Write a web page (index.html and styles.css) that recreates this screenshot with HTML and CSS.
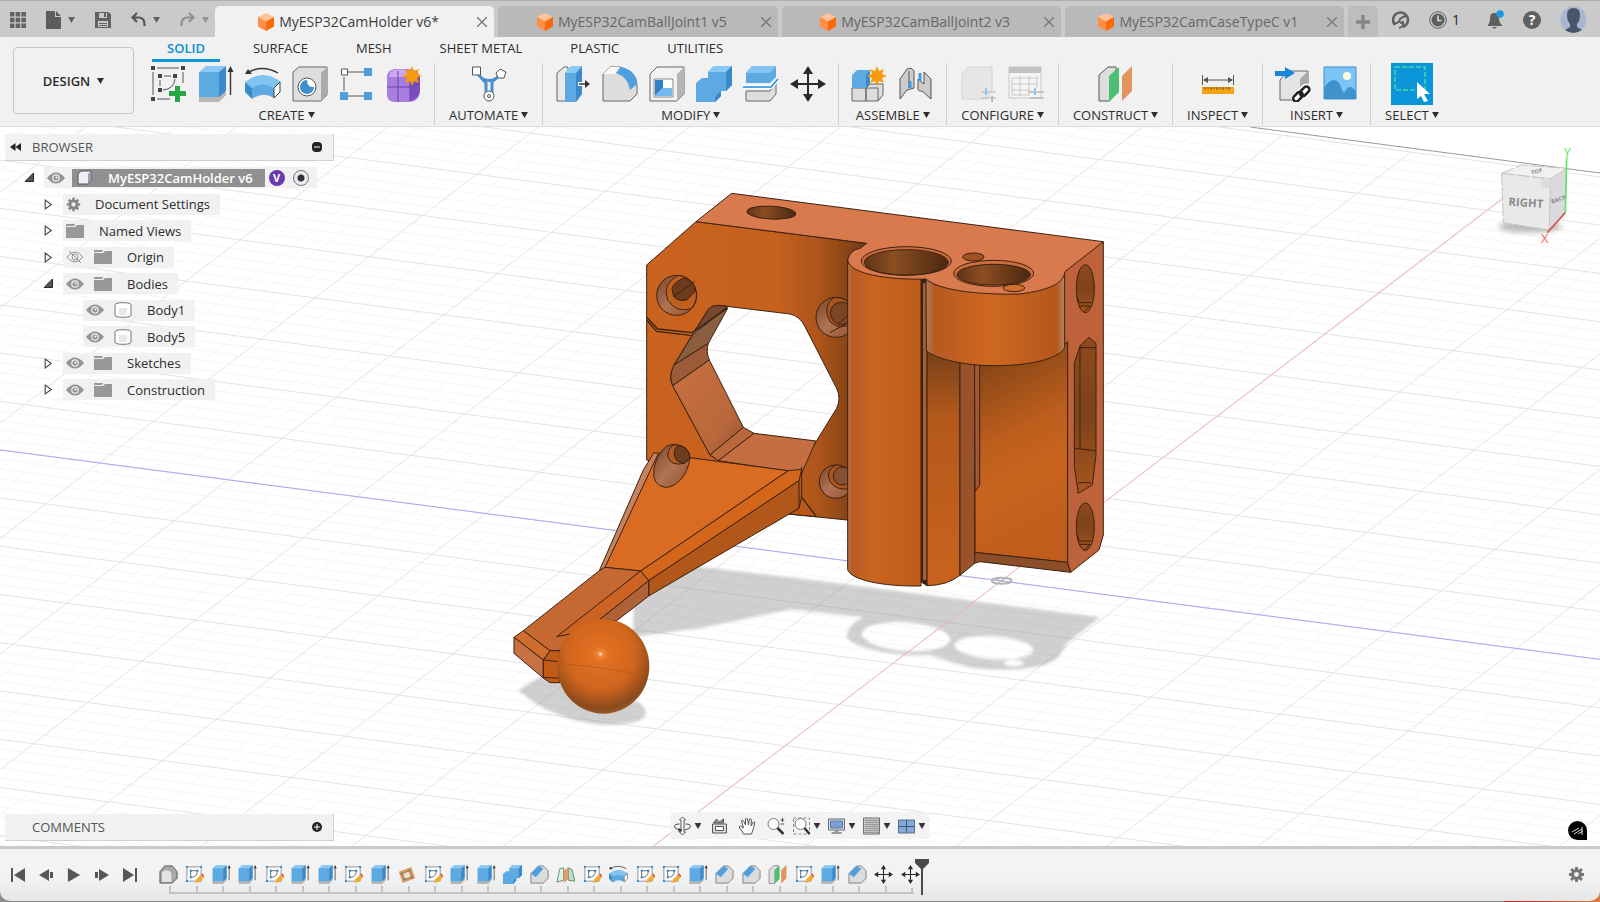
FILE: index.html
```html
<!DOCTYPE html>
<html lang="en">
<head>
  <meta charset="UTF-8">
  <meta name="viewport" content="width=device-width, initial-scale=1.0">
  <title>MyESP32CamHolder v6</title>
  <link rel="stylesheet" href="styles.css">
</head>
<body>
  <!-- shared icons -->
  <svg class="sprite" aria-hidden="true">
    <symbol id="caret" viewBox="0 0 8 7"><path d="M0 0H8L4 7Z" fill="currentColor"/></symbol>
    <symbol id="cube" viewBox="0 0 16 18">
      <path d="M8 0L16 4 8 9 0 4Z" fill="#ffc29b"/><path d="M0 4L8 8.500V18L0 13.500Z" fill="#ff8f45"/><path d="M16 4L8 8.500V18L16 13.500Z" fill="#fb6a0a"/>
    </symbol>
    <symbol id="close" viewBox="0 0 10 10"><path d="M1 1L9 9M9 1L1 9" stroke="currentColor" stroke-width="1.100"/></symbol>
    <symbol id="gear" viewBox="0 0 18 18">
      <path d="M9 1V17M1 9H17M3.300 3.300L14.700 14.700M14.700 3.300L3.300 14.700" stroke="currentColor" stroke-width="3"/>
      <circle cx="9" cy="9" r="5.800" fill="currentColor"/><circle cx="9" cy="9" r="2.600" fill="#f0f0f0"/>
    </symbol>
    <symbol id="eye" viewBox="0 0 18 12">
      <path d="M0 6Q9 -5 18 6Q9 17 0 6Z" fill="#949494"/><circle cx="9" cy="6" r="3.800" fill="#f0f0f0"/><circle cx="9" cy="6" r="2.600" fill="#949494"/><circle cx="9.500" cy="5.500" r="1" fill="#fff"/>
    </symbol>
    <symbol id="eye-off" viewBox="0 0 18 12">
      <path d="M1 6Q9 -4 17 6Q9 16 1 6Z" fill="none" stroke="#949494"/><circle cx="9" cy="6" r="3" fill="none" stroke="#949494"/><path d="M3 0L15 12" stroke="#949494"/>
    </symbol>
    <symbol id="folder" viewBox="0 0 18 14"><path d="M0 3H9L11 1H18V14H0Z" fill="#989898"/><path d="M0 0H9L8 2H0Z" fill="#989898"/></symbol>
    <symbol id="body" viewBox="0 0 18 16">
      <path d="M1 3Q1 .700 9 .700T17 3V13Q17 15.300 9 15.300T1 13Z" fill="#fff" stroke="#777"/><path d="M5 6H13V13H5Z" fill="#e8e8ec"/>
    </symbol>
    <symbol id="arrow-shut" viewBox="0 0 8 10"><path d="M1 1V9L6.500 5Z" fill="#fff" stroke="#444"/></symbol>
    <symbol id="arrow-open" viewBox="0 0 9 9"><path d="M8.500 0V8.500H0Z" fill="#555" stroke="#222"/></symbol>

    <symbol id="sketch" viewBox="0 0 36 36">
      <path d="M6 2H28M32 6V17M2 6V29M6 33H19" fill="none" stroke="#555"/>
      <path d="M13 10H20M9 14V20M24 13Q23 23 12 24" fill="none" stroke="#555"/>
      <path d="M0 0h4v4H0zM30 0h4v4h-4zM0 31h4v4H0zM7 8h4v4H7zM22 8h4v4h-4zM7 22h4v4H7z" fill="#444"/>
      <path d="M24 20h5v5h6v5h-6v6h-5v-6h-6v-5h6z" fill="#27a745"/>
    </symbol>
    <symbol id="extrude" viewBox="0 0 36 36">
      <path d="M1 31L8 26H28V29L21 36H1Z" fill="#b7b7b7"/><path d="M1 6L8 0H28L21 6Z" fill="#8ac8f5"/><path d="M1 6H21V31H1Z" fill="#5da9e2"/><path d="M21 6L28 0V25L21 31Z" fill="#3a8acb"/>
      <path d="M32.500 29V4" stroke="#333" stroke-width="1.400"/><path d="M29.500 6L32.500 0 35.500 6Z" fill="#333"/>
    </symbol>
    <symbol id="revolve" viewBox="0 0 36 36">
      <path d="M2 7Q17 -2 33 7" fill="none" stroke="#333" stroke-width="1.400"/><path d="M0 8L3 3 7 8Z" fill="#333"/>
      <path d="M0 16Q18 2 36 16L29 23Q18 15 7 23Z" fill="#82c3f2"/><path d="M0 16L7 22V33L0 26Z" fill="#3a8acb"/><path d="M7 22Q18 15 29 22V32Q18 25 7 33Z" fill="#5da9e2"/><path d="M29 22L35 16V26L29 32Z" fill="#fff" stroke="#444"/>
    </symbol>
    <symbol id="hole" viewBox="0 0 36 36">
      <path d="M1 6L7 1H35V29L29 35H1Z" fill="#dedede" stroke="#666"/><path d="M29 7L35 1V29L29 35Z" fill="#aaa"/>
      <circle cx="15" cy="21" r="9" fill="#fff" stroke="#555"/><path d="M15 14A7 7 0 1 0 22 21Q15 22 15 14Z" fill="#3b8fd0"/>
    </symbol>
    <symbol id="pattern" viewBox="0 0 36 36">
      <path d="M9 6H25M5 11V25M9 30H25" stroke="#555"/><path d="M2.500 3h6v6h-6z" fill="#fff" stroke="#555"/><path d="M25 2h8v8h-8zM1 26h8v8H1zM25 26h8v8h-8z" fill="#4f9fdf"/>
    </symbol>
    <symbol id="form" viewBox="0 0 36 36">
      <path d="M1 11Q1 4 9 3H22Q33 3 34 12V24Q34 36 22 36H9Q1 36 1 28Z" fill="#a87de0"/><path d="M24 12L34 9V24Q33 33 24 35Z" fill="#7a4dba"/><path d="M4 6Q10 2 20 4L22 11H3Z" fill="#c9aaf0"/>
      <path d="M1 21H24L34 17M12 5V36M24 11V35" fill="none" stroke="#6e45ab"/>
      <path d="M26 0l2 5 5-2-2 5 5 2-5 2 2 5-5-2-2 5-2-5-5 2 2-5-5-2 5-2-2-5 5 2z" fill="#f79c0c"/>
    </symbol>
    <symbol id="automate" viewBox="0 0 36 36">
      <path d="M6 7L15 17V27M30 8L21 16V27M10 12Q18 17 26 12" fill="none" stroke="#4a90cf" stroke-width="3"/>
      <path d="M1.500 1h8v8h-8zM29 3l6 3-2 6-6 0-2-5z" fill="#fff" stroke="#555"/><circle cx="18" cy="30" r="5" fill="#fff" stroke="#555"/><circle cx="18" cy="30" r="1.500" fill="none" stroke="#555"/>
    </symbol>
    <symbol id="presspull" viewBox="0 0 36 36">
      <path d="M2 7L9 1H13V35H2Z" fill="#e9e9e9" stroke="#666"/><path d="M10 7L16 0H27L21 7Z" fill="#8ac8f5"/><path d="M10 7H21V36H10Z" fill="#5da9e2"/><path d="M21 7L27 0V28L21 36Z" fill="#3a8acb"/>
      <path d="M23 18H32" stroke="#fff" stroke-width="4"/><path d="M24 18H31" stroke="#333" stroke-width="1.500"/><path d="M30 14L35 18 30 22Z" fill="#333"/>
    </symbol>
    <symbol id="fillet" viewBox="0 0 36 36">
      <path d="M1 8L8 1H18Q35 6 35 19V28L28 35H1Z" fill="#ddd" stroke="#666"/><path d="M1 8L8 1H18L13 8Z" fill="#fafafa"/><path d="M14 7L19 1Q34 4 35 18L28 24Q26 11 14 7Z" fill="#4f9fdf"/>
    </symbol>
    <symbol id="shell" viewBox="0 0 36 36">
      <path d="M1 8L8 1H35V28L28 35H1Z" fill="#f2f2f2" stroke="#666"/><path d="M28 8L35 1V28L28 35Z" fill="#b5b5b5"/><path d="M5 13H24V31H5Z" fill="#fff" stroke="#888"/><path d="M6 14H14V22L6 30Z" fill="#2f80c4"/><path d="M6 30L14 22H23V30Z" fill="#72baf0"/>
    </symbol>
    <symbol id="combine" viewBox="0 0 36 36">
      <path d="M12 6L18 0H36V19L30 25H25V30L19 36H0V17L6 12H12Z" fill="#5da9e2"/><path d="M12 6L18 0H36L30 6Z" fill="#8ac8f5"/><path d="M30 6L36 0V19L30 25ZM19 31L25 24V30L19 36Z" fill="#3a8acb"/>
    </symbol>
    <symbol id="split" viewBox="0 0 36 36">
      <path d="M3 7L9 0H33V11L27 17H3Z" fill="#5da9e2"/><path d="M3 7L9 0H33L27 7Z" fill="#82c3f2"/><path d="M3 25H27L33 17V28L27 35H3Z" fill="#ddd" stroke="#666"/>
      <path d="M0 21H28L35 13" fill="none" stroke="#fff" stroke-width="4"/><path d="M0 21H28L35 13" fill="none" stroke="#1c8add" stroke-width="1.500"/>
    </symbol>
    <symbol id="move" viewBox="0 0 36 36">
      <path d="M18 5V31M5 18H31" stroke="#2a2a2a" stroke-width="2"/><path d="M18 0l5 8H13zM18 36l5-8H13zM0 18l8-5v10zM36 18l-8-5v10z" fill="#2a2a2a"/>
    </symbol>
    <symbol id="component" viewBox="0 0 36 36">
      <path d="M1 22H15V35H1ZM15 22L19 18H32V29L27 35H15Z" fill="#ddd" stroke="#666"/><path d="M1 9L6 4H19V17L15 22H1Z" fill="#5da9e2"/><path d="M15 9L19 4V17L15 22Z" fill="#3a8acb"/><path d="M15 22H27V35" fill="none" stroke="#666"/>
      <path d="M26 0l2 5 5-2-2 5 5 2-5 2 2 5-5-2-2 5-2-5-5 2 2-5-5-2 5-2-2-5 5 2z" fill="#f79c0c"/>
    </symbol>
    <symbol id="joint" viewBox="0 0 36 36">
      <path d="M2 13L9 3Q14 1 16 5V22L9 24 2 33Z" fill="#ccc" stroke="#555"/><path d="M11 5V22" stroke="#555"/><path d="M26 6L33 13V33L24 25Q19 26 20 20V13L26 18Z" fill="#ccc" stroke="#555"/><path d="M12 15V22M22 7V15" stroke="#3b9be5" stroke-width="3"/>
    </symbol>
    <symbol id="config" viewBox="0 0 36 36">
      <path d="M1 8L8 1H31V24L26 33H1Z" fill="#e6e6e6" stroke="#d4d4d4"/><path d="M20 26H35M20 32H35" stroke="#c8c8c8" stroke-width="1.500"/><path d="M25 22V29" stroke="#8cc7f2" stroke-width="2"/><path d="M31 30V36" stroke="#bbb" stroke-width="2"/>
    </symbol>
    <symbol id="config-table" viewBox="0 0 36 36">
      <path d="M1 1H33V32H1Z" fill="#f4f4f4" stroke="#c8c8c8"/><path d="M1 1H33V7H1Z" fill="#c2c2c2"/><path d="M4 12H30M4 18H30M4 24H22M4 29H20M4 12V29M12 10V30M21 10V30M29 10V22" stroke="#c8c8c8"/><path d="M20 26H36M22 32H36" stroke="#b8b8b8" stroke-width="1.500"/><path d="M27 22V29" stroke="#8cc7f2" stroke-width="2"/>
    </symbol>
    <symbol id="plane" viewBox="0 0 36 36">
      <path d="M2 9L11 1H19V28L12 35H2Z" fill="#ddd" stroke="#555"/><path d="M12 10L22 1V26L12 36Z" fill="#4cbf74"/><path d="M25 10L35 0V25L25 35Z" fill="#e3935e"/>
    </symbol>
    <symbol id="measure" viewBox="0 0 36 36">
      <path d="M2.500 9V19M33.500 9V19M4 14H32" stroke="#555"/><path d="M3 14l5-3v6zM33 14l-5-3v6z" fill="#555"/><path d="M2 21H34V28H2Z" fill="#f5a313"/><path d="M5 21v3M8 21v2M11 21v3M14 21v2M17 21v3M20 21v2M23 21v3M26 21v2M29 21v3" stroke="#6e4a0c"/>
    </symbol>
    <symbol id="insert" viewBox="0 0 36 36">
      <path d="M5 14L13 5H33V26L25 34H5Z" fill="#e4e4e4" stroke="#666"/><path d="M25 13L33 5V26L25 34Z" fill="#aaa"/><path d="M0 5H10V1L20 7 10 13V10H0Z" fill="#1785d8"/>
      <g fill="none" stroke="#fff" stroke-width="6"><rect x="19" y="28" width="10" height="6" rx="3" transform="rotate(-45 24 31)"/><rect x="25" y="22" width="10" height="6" rx="3" transform="rotate(-45 30 25)"/></g>
      <g fill="none" stroke="#222" stroke-width="2.500"><rect x="18" y="27" width="11" height="6" rx="3" transform="rotate(-45 24 31)"/><rect x="24" y="22" width="11" height="6" rx="3" transform="rotate(-45 30 25)"/></g>
    </symbol>
    <symbol id="decal" viewBox="0 0 36 36">
      <path d="M2 1H34V33H2Z" fill="#7cc3f6"/><circle cx="25" cy="10" r="4" fill="#fffbe0"/><path d="M2 22Q7 14 12 14T20 24L22 27Q25 21 28 21T34 26V33H2Z" fill="#3f92cb"/><path d="M2 1H34V33H2Z" fill="none" stroke="#3f92cb"/>
    </symbol>
    <symbol id="select" viewBox="0 0 42 42">
      <path d="M0 0H42V42H0Z" fill="#0b95d9"/><path d="M4 4H34V27H4Z" fill="none" stroke="#43d9a3" stroke-width="1.500" stroke-dasharray="5 2"/><path d="M26 19L39 31H33L37 38 33 39 30 33 26 36Z" fill="#fff"/>
    </symbol>

    <symbol id="t-base" viewBox="0 0 20 20"><path d="M1 7L6 1H14L19 7V14L14 19H1Z" fill="#a8a8a8" stroke="#555"/><path d="M3 8Q8 3 13 8V18H3Z" fill="#e4e4e4"/></symbol>
    <symbol id="t-sketch" viewBox="0 0 20 20">
      <path d="M2 2H17V17H2Z" fill="#fff" stroke="#8a8f96"/><path d="M6 6H13Q13 13 6 13Z" fill="none" stroke="#666"/>
      <path d="M1 1h2v2H1zM16 1h2v2h-2zM1 16h2v2H1zM5 5h2v2H5zM12 5h2v2h-2zM5 12h2v2H5z" fill="#1785d8"/><path d="M11 19L12 15 17 10 20 13 15 18Z" fill="#f2a92f"/><path d="M17 10L18 9 21 12 20 13Z" fill="#d33"/>
    </symbol>
    <symbol id="t-chamfer" viewBox="0 0 20 20"><path d="M1 9L9 1H14L19 6V14L14 19H1Z" fill="#dcdcdc" stroke="#808080"/><path d="M1 9L9 1 14 4 6 13Z" fill="#4f9fdf"/></symbol>
    <symbol id="t-canvas" viewBox="0 0 20 20"><path d="M2 7L15 2 19 14 6 19Z" fill="#dd9566"/><path d="M6 9L13 6 15 13 8 15Z" fill="#f4dfcf" stroke="#a6764f"/><path d="M4 8h2v2H4zM12 5h2v2h-2zM7 14h2v2H7zM15 12h2v2h-2z" fill="#4a9a4a"/></symbol>
    <symbol id="t-midplane" viewBox="0 0 20 20"><path d="M4 4L8 3V16L1 18Z" fill="#dff0e4" stroke="#5a8f6c"/><path d="M13 3L17 5 20 17 13 16Z" fill="#b9dcc5" stroke="#5a8f6c"/><path d="M8 6L13 2V15L8 19Z" fill="#e89a6a"/></symbol>
  </svg>

  <header class="titlebar">
    <div class="quick-tools">
      <button aria-label="Data panel"><svg width="16" height="16" viewBox="0 0 16 16"><path d="M0 0h4.500v4.500H0zM5.700 0h4.500v4.500H5.700zM11.400 0H16v4.500h-4.600zM0 5.700h4.500v4.500H0zM5.700 5.700h4.500v4.500H5.700zM11.400 5.700H16v4.500h-4.600zM0 11.400h4.500V16H0zM5.700 11.400h4.500V16H5.700zM11.400 11.400H16V16h-4.600z" fill="#626262"/></svg></button>
      <button aria-label="File"><svg width="15" height="18" viewBox="0 0 15 18"><path d="M0 0H9V6H15V18H0ZM10 0L15 5H10Z" fill="#5c5c5c"/></svg><svg class="caret"><use href="#caret"/></svg></button>
      <button aria-label="Save"><svg width="16" height="16" viewBox="0 0 16 16"><path d="M0 0H13L16 2V16H0Z" fill="#626262"/><path d="M4 1H12V6H4ZM3 9H13V15H3Z" fill="#c9c9c9"/><path d="M9 1h2v4H9zM4 11h8v1H4zM4 13h8v1H4z" fill="#626262"/></svg></button>
      <button aria-label="Undo"><svg width="15" height="15" viewBox="0 0 15 15"><path d="M6 1L1.500 5.500 6 10M2 5.500H8Q14 6 13.500 14" fill="none" stroke="#555" stroke-width="2.200"/></svg><svg class="caret"><use href="#caret"/></svg></button>
      <button aria-label="Redo" class="off"><svg width="15" height="15" viewBox="0 0 15 15"><path d="M9 1L13.500 5.500 9 10M13 5.500H7Q1 6 1.500 14" fill="none" stroke="#909090" stroke-width="2.200"/></svg><svg class="caret"><use href="#caret"/></svg></button>
    </div>
    <nav class="doc-tabs" aria-label="Documents">
      <div class="doc-tab active"><button class="doc-name"><svg><use href="#cube"/></svg>MyESP32CamHolder v6*</button><button class="close" aria-label="Close"><svg><use href="#close"/></svg></button></div>
      <div class="doc-tab"><button class="doc-name"><svg><use href="#cube"/></svg>MyESP32CamBallJoint1 v5</button><button class="close" aria-label="Close"><svg><use href="#close"/></svg></button></div>
      <div class="doc-tab"><button class="doc-name"><svg><use href="#cube"/></svg>MyESP32CamBallJoint2 v3</button><button class="close" aria-label="Close"><svg><use href="#close"/></svg></button></div>
      <div class="doc-tab"><button class="doc-name"><svg><use href="#cube"/></svg>MyESP32CamCaseTypeC v1</button><button class="close" aria-label="Close"><svg><use href="#close"/></svg></button></div>
      <button class="new-tab" aria-label="New design"><svg width="14" height="14" viewBox="0 0 14 14"><path d="M7 0V14M0 7H14" stroke="#858585" stroke-width="3.500"/></svg></button>
    </nav>
    <div class="account-tools">
      <button aria-label="Extensions"><svg width="18" height="18" viewBox="0 0 18 18"><path d="M3 14A7.500 7.500 0 1 1 11 16" fill="none" stroke="#5f5f5f" stroke-width="2.500"/><path d="M2 12Q7 13 8 8L11 6 14 5M7 17Q12 16 11 11L8 12" fill="none" stroke="#5f5f5f" stroke-width="2"/></svg></button>
      <button class="jobs" aria-label="Job status"><svg width="18" height="18" viewBox="0 0 18 18"><circle cx="9" cy="9" r="8.300" fill="none" stroke="#5f5f5f"/><circle cx="9" cy="9" r="6.500" fill="#5f5f5f"/><path d="M9 4.500V9.500H12.500" fill="none" stroke="#ddd" stroke-width="1.500"/></svg>1</button>
      <button class="bell" aria-label="Notifications"><svg width="17" height="19" viewBox="0 0 17 19"><path d="M1 15Q3 13 3 8Q3 3 7.500 3T12 8Q12 13 15 15V16H1ZM5 17H10Q7.500 20 5 17Z" fill="#5f5f5f"/><circle cx="13" cy="4" r="3.800" fill="#1a96e0"/></svg></button>
      <button aria-label="Help" class="help">?</button>
      <button aria-label="Profile"><svg width="27" height="27" viewBox="0 0 27 27"><circle cx="13.500" cy="13.500" r="13" fill="#a9b6cf"/><path d="M7 9Q7 2 13.500 2T20 9Q20 15 17 18V21L22 24Q13 30 5 24L10 21V18Q7 15 7 9Z" fill="#48566b"/></svg></button>
    </div>
  </header>

  <section class="ribbon">
    <button class="workspace">DESIGN <svg class="caret"><use href="#caret"/></svg></button>
    <div class="ribbon-main">
      <nav class="ribbon-tabs" aria-label="Toolbar tabs">
        <button class="active">SOLID</button>
        <button>SURFACE</button>
        <button>MESH</button>
        <button>SHEET METAL</button>
        <button>PLASTIC</button>
        <button>UTILITIES</button>
      </nav>
      <div class="groups">
        <div class="group">
          <div class="tools">
            <button aria-label="Create Sketch"><svg><use href="#sketch"/></svg></button>
            <button aria-label="Extrude"><svg><use href="#extrude"/></svg></button>
            <button aria-label="Revolve"><svg><use href="#revolve"/></svg></button>
            <button aria-label="Hole"><svg><use href="#hole"/></svg></button>
            <button aria-label="Rectangular Pattern"><svg><use href="#pattern"/></svg></button>
            <button aria-label="Create Form"><svg><use href="#form"/></svg></button>
          </div>
          <button class="group-name">CREATE<svg class="caret"><use href="#caret"/></svg></button>
        </div>
        <div class="group">
          <div class="tools"><button aria-label="Automated Modeling"><svg><use href="#automate"/></svg></button></div>
          <button class="group-name">AUTOMATE<svg class="caret"><use href="#caret"/></svg></button>
        </div>
        <div class="group">
          <div class="tools">
            <button aria-label="Press Pull"><svg><use href="#presspull"/></svg></button>
            <button aria-label="Fillet"><svg><use href="#fillet"/></svg></button>
            <button aria-label="Shell"><svg><use href="#shell"/></svg></button>
            <button aria-label="Combine"><svg><use href="#combine"/></svg></button>
            <button aria-label="Split Body"><svg><use href="#split"/></svg></button>
            <button aria-label="Move/Copy"><svg><use href="#move"/></svg></button>
          </div>
          <button class="group-name">MODIFY<svg class="caret"><use href="#caret"/></svg></button>
        </div>
        <div class="group">
          <div class="tools">
            <button aria-label="New Component"><svg><use href="#component"/></svg></button>
            <button aria-label="Joint"><svg><use href="#joint"/></svg></button>
          </div>
          <button class="group-name">ASSEMBLE<svg class="caret"><use href="#caret"/></svg></button>
        </div>
        <div class="group">
          <div class="tools">
            <button aria-label="Configure" disabled><svg><use href="#config"/></svg></button>
            <button aria-label="Configuration Table" disabled><svg><use href="#config-table"/></svg></button>
          </div>
          <button class="group-name">CONFIGURE<svg class="caret"><use href="#caret"/></svg></button>
        </div>
        <div class="group">
          <div class="tools"><button aria-label="Offset Plane"><svg><use href="#plane"/></svg></button></div>
          <button class="group-name">CONSTRUCT<svg class="caret"><use href="#caret"/></svg></button>
        </div>
        <div class="group">
          <div class="tools"><button aria-label="Measure"><svg><use href="#measure"/></svg></button></div>
          <button class="group-name">INSPECT<svg class="caret"><use href="#caret"/></svg></button>
        </div>
        <div class="group">
          <div class="tools">
            <button aria-label="Insert Derive"><svg><use href="#insert"/></svg></button>
            <button aria-label="Decal"><svg><use href="#decal"/></svg></button>
          </div>
          <button class="group-name">INSERT<svg class="caret"><use href="#caret"/></svg></button>
        </div>
        <div class="group">
          <div class="tools"><button class="select-tool" aria-label="Select"><svg><use href="#select"/></svg></button></div>
          <button class="group-name">SELECT<svg class="caret"><use href="#caret"/></svg></button>
        </div>
      </div>
    </div>
  </section>

  <main class="viewport">
    <svg class="scene" viewBox="0 127 1600 719" preserveAspectRatio="xMidYMid slice" role="img" aria-label="3D model">
      <defs>
        <linearGradient id="plate" x1="0" x2="1"><stop offset="0" stop-color="#c9631f"/><stop offset=".6" stop-color="#c5601d"/><stop offset=".8" stop-color="#a9531a"/><stop offset="1" stop-color="#6d3a13"/></linearGradient>
        <linearGradient id="cyl" x1="0" x2="1"><stop offset="0" stop-color="#b4754f"/><stop offset=".06" stop-color="#b85c25"/><stop offset=".35" stop-color="#cb641f"/><stop offset="1" stop-color="#bd5c1c"/></linearGradient>
        <linearGradient id="cyl2" x1="0" x2="1"><stop offset="0" stop-color="#b07a5c"/><stop offset=".06" stop-color="#b55a22"/><stop offset=".45" stop-color="#cf6820"/><stop offset=".94" stop-color="#b4571c"/><stop offset="1" stop-color="#b58468"/></linearGradient>
        <linearGradient id="recess" x1="0" y1="0" x2=".2" y2="1"><stop offset="0" stop-color="#5c3212"/><stop offset=".2" stop-color="#8f4a18"/><stop offset=".5" stop-color="#bd5e1d"/><stop offset=".7" stop-color="#c8641e"/><stop offset="1" stop-color="#c05d1c"/></linearGradient>
        <linearGradient id="under" x1="0" y1="0" x2="0" y2="1"><stop offset="0" stop-color="#74401a"/><stop offset=".3" stop-color="#b4591c"/><stop offset="1" stop-color="#c8631e"/></linearGradient>
        <linearGradient id="bore" x1="0" x2="1"><stop offset="0" stop-color="#5e3517"/><stop offset=".35" stop-color="#8c4e22"/><stop offset="1" stop-color="#4a2810"/></linearGradient>
        <linearGradient id="slot" x1="0" x2="0" y1="0" y2="1"><stop offset="0" stop-color="#8e4a1d"/><stop offset=".5" stop-color="#7d431a"/><stop offset="1" stop-color="#a6551d"/></linearGradient>
        <linearGradient id="wall" x1="0" y1="0" x2="1" y2="1"><stop offset="0" stop-color="#c96f40"/><stop offset=".7" stop-color="#b9683c"/><stop offset="1" stop-color="#8d5232"/></linearGradient>
        <linearGradient id="crescent" x1="0" y1="0" x2="1" y2="1"><stop offset="0" stop-color="#7a452a"/><stop offset=".5" stop-color="#b07455"/><stop offset="1" stop-color="#96522b"/></linearGradient>
        <radialGradient id="ball" cx=".47" cy=".37" r=".68"><stop offset="0" stop-color="#ffe9d0"/><stop offset=".04" stop-color="#ee8a3c"/><stop offset=".12" stop-color="#e27022"/><stop offset=".55" stop-color="#d0651d"/><stop offset=".85" stop-color="#8b4a1c"/><stop offset="1" stop-color="#a56439"/></radialGradient>
        <filter id="soft" x="-5%" y="-5%" width="110%" height="110%"><feGaussianBlur stdDeviation="4"/></filter>
      </defs>

      <path id="grid-minor" class="grid minor"/>
      <path id="grid-major" class="grid major"/>
      <path class="horizon" d="M1250 127L1600 173"/>

      <!-- model, three units per screen pixel -->
      <g transform="translate(500 180) scale(.33333)">
        <g fill="#909090" fill-opacity=".42" filter="url(#soft)">
          <path fill-rule="evenodd" d="M400 1200L600 1160 960 1203 1800 1312 1700 1390 1680 1425C1650 1475 1480 1475 1400 1460L1290 1425C1200 1430 1040 1405 1040 1365Q1045 1335 1090 1312L872 1288 600 1345 400 1370ZM1088 1370a130 42 4 1 0 260 0a130 42 4 1 0 -260 0ZM1367 1403a115 34 4 1 0 230 0a115 34 4 1 0 -230 0ZM1512 1449a30 10 0 1 0 60 0a30 10 0 1 0 -60 0Z"/>
          <path d="M55 1530L140 1480 400 1560Q440 1575 437 1605C420 1635 330 1640 270 1630C160 1610 100 1570 55 1530Z"/>
        </g>
        <g fill="none" stroke-width="3">
          <path d="M-1500 810L3300 1438" stroke="#a9a9f2"/><path d="M460 1998L3115 -25" stroke="#f2b6bd"/>
          <ellipse cx="1505" cy="1202" rx="30" ry="9" stroke="#b5b5b8" stroke-width="6"/><path d="M1480 1196L1530 1208M1490 1210L1520 1194" stroke="#b5b5b8"/>
        </g>

        <g stroke="#3c2110" stroke-width="3" stroke-linejoin="round">
          <path fill="url(#plate)" fill-rule="evenodd" d="M440 255L588 125 1100 190V1026L865 1002 650 900 440 840ZM655 376L870 402Q900 408 915 440L1010 625Q1024 655 1010 685L905 855V880L655 842 630 825 518 617Q505 590 522 555L578 462 625 388Q635 376 655 376Z"/>
          <path fill="#8b5d41" d="M683 385L625 490 522 555 578 465 680 382Z"/>
          <path fill="#9c5b38" d="M522 555L625 490Q617 515 628 540L518 617Q505 590 522 555Z"/>
          <path fill="url(#wall)" d="M518 617L628 540 730 742 630 825Z"/>
          <path fill="#bb683d" d="M630 825L730 742 762 760 655 842Z"/>
          <path fill="#c46e42" d="M655 842L762 760 948 783 905 880Z"/>
          <path fill="#76482f" d="M600 430L625 388Q635 376 655 376L683 380 578 460Z"/>
          <path fill="none" d="M440 412L473 447 577 458 683 384M440 420L470 454 572 466" stroke-width="4"/>

          <circle cx="530" cy="346" r="60" fill="url(#crescent)"/><path fill="#c0601f" d="M535 286A60 60 0 0 1 574 386Q530 400 503 360 485 310 535 286Z"/>
          <path fill="#6d3c1c" d="M516 325Q522 305 555 293Q590 310 585 335L560 360Q518 370 516 325ZM520 350L583 305"/>
          <circle cx="1008" cy="412" r="60" fill="url(#crescent)"/><path fill="#a8551d" d="M1000 353A60 60 0 0 1 1066 426Q1020 455 990 425 965 380 1000 353Z"/><circle cx="1025" cy="400" r="34" fill="#7a4523"/><path fill="none" d="M1015 432L1060 390M990 458L1050 425"/>
          <circle cx="1008" cy="905" r="50" fill="url(#crescent)"/><path fill="#a8551d" d="M1008 855A50 50 0 0 1 1055 925Q1010 935 990 905 975 870 1008 855Z"/><circle cx="1027" cy="888" r="27" fill="#875032"/>
        </g>

        <!-- arm -->
        <g stroke="#3c2110" stroke-width="3" stroke-linejoin="round">
          <path fill="#b9571b" d="M897 985L905 950 950 1010 865 1002Z"/>
          <path fill="none" d="M903 950L948 1010M905 860V950"/>
          <path fill="#c6835f" d="M462 818L478 820 315 1165 298 1172 430 870Z"/>
          <path fill="#d96b22" d="M475 820L570 833 865 872 422 1173 315 1162Z"/>
          <path fill="#d4661c" d="M865 872L905 868 897 902 446 1202 422 1173Z"/>
          <path fill="#b2571a" d="M897 902V985L446 1248V1202Z"/>
          <path fill="#c56832" d="M298 1172L315 1162 422 1173 230 1330V1412H150L70 1352Z"/>
          <path fill="#cc6322" d="M422 1173L446 1202 300 1318 220 1360 170 1370Z"/>
          <path fill="#ad6238" d="M446 1202V1248L350 1322 300 1318Z"/>
          <path fill="#cf6c30" d="M70 1352L150 1412 130 1440 42 1372Z"/>
          <path fill="#c87143" d="M42 1372L130 1440V1494L42 1420Z"/>
          <path fill="#c05a17" d="M130 1440L150 1412H180V1508H150L130 1494Z"/>
          <path fill="none" d="M130 1440L180 1445M130 1492L180 1495"/>
          <path fill="url(#crescent)" d="M570 833C560 900 520 922 495 922Q455 915 462 868C466 840 485 795 520 793Q568 795 570 833Z"/>
          <path fill="#b55c22" d="M503 828Q505 795 528 794 565 798 570 835L555 850Q510 860 503 828Z"/>
          <path fill="#6d3d20" d="M523 815Q525 798 540 797 568 805 569 833L552 850Q520 845 523 815Z"/>
        </g>
        <ellipse cx="310" cy="1459" rx="138" ry="142" fill="url(#ball)"/>
        <path d="M174 1450Q300 1460 440 1487" fill="none" stroke="#b0561a" stroke-width="2"/>

        <!-- right block and cylinders -->
        <g stroke="#3c2110" stroke-width="3" stroke-linejoin="round">
          <path fill="url(#recess)" d="M1423 460H1703V1147L1425 1117Z"/>
          <path fill="#8c4d29" d="M1423 1117L1703 1147 1712 1177 1440 1145 1423 1150Z"/>
          <path fill="#a05a33" d="M1423 520H1439V915L1425 935Z"/>
          <path fill="url(#under)" d="M1280 500H1380V1186Q1340 1217 1280 1217Z"/>
          <path fill="#98532a" d="M1380 520H1424V1150L1380 1186Z"/>
          <path fill="#3a2314" d="M1262 297H1281V1217L1262 1205Z"/><path fill="#a35f39" d="M1269 310H1279V1200H1269Z" stroke="none"/>
          <path fill="url(#cyl)" d="M1043 235L1263 280V1218C1150 1220 1050 1200 1043 1168Z"/>
          <path fill="#bd623a" d="M1690 260L1810 185V1065L1797 1110 1712 1177 1703 1147V485L1690 495Z"/>
          <path fill="url(#cyl2)" d="M1278 290L1694 260V500C1690 525 1620 558 1480 557 1380 557 1290 530 1279 510Z"/>
          <path fill="#d97a4e" d="M588 125L695 40 1810 185 1695 275C1690 310 1650 330 1560 342 1460 345 1320 335 1278 297 1200 300 1050 290 1043 240Q1050 210 1080 205L1100 190Z"/>
        </g>
        <g stroke="#3c2110" stroke-width="3">
          <ellipse cx="814" cy="98" rx="73" ry="19" fill="url(#bore)" transform="rotate(3 814 98)"/>
          <ellipse cx="1219" cy="243" rx="135" ry="43" fill="#c96b3e"/><ellipse cx="1219" cy="247" rx="126" ry="38" fill="url(#bore)"/>
          <ellipse cx="1481" cy="280" rx="120" ry="39" fill="#cc6d3f"/><ellipse cx="1481" cy="284" rx="110" ry="31" fill="url(#bore)"/>
          <ellipse cx="1420" cy="231" rx="32" ry="12" fill="#a35022"/><ellipse cx="1542" cy="324" rx="32" ry="11" fill="#d06c2c"/>
          <ellipse cx="1756" cy="326" rx="27" ry="72" fill="url(#slot)"/><path fill="none" d="M1731 350L1738 368H1774M1738 378H1770L1752 396"/>
          <path fill="url(#slot)" d="M1767 472L1788 490V825L1777 915 1735 940 1723 860V550L1740 498Z"/><path fill="none" d="M1740 503H1788M1740 498V808M1723 805L1788 812M1735 908H1772"/>
          <ellipse cx="1756" cy="1040" rx="27" ry="71" fill="url(#slot)"/><path fill="none" d="M1731 1065L1738 1083H1774M1738 1093H1770L1752 1111"/>
        </g>
      </g>
    </svg>

    <svg class="viewcube" viewBox="0 0 480 390" role="img" aria-label="View cube">
      <ellipse class="cube-shadow" cx="270" cy="290" rx="95" ry="18"/>
      <g stroke="#c4c4c4" stroke-width="3" stroke-dasharray="40 6">
        <path d="M185 130L245 105 380 115 332 147Z" fill="#f1f1f1"/><path d="M185 130L332 147 328 300 190 278Z" fill="#e9e9ea"/><path d="M332 147L380 115 376 247 328 300Z" fill="#dadadc"/>
      </g>
      <path d="M303 147L332 150V176L303 172Z" fill="#dcdcdd"/>
      <text x="258" y="230" class="face" transform="rotate(4 258 216)">RIGHT</text>
      <text x="354" y="214" class="face side" transform="rotate(-20 354 204)">BACK</text>
      <text x="290" y="130" class="face side" transform="rotate(-15 290 124)">TOP</text>
      <path d="M380 82L376 248" stroke="#63e763" stroke-width="5"/><path d="M376 248L322 308" stroke="#d95555" stroke-width="5"/>
      <text x="382" y="80" class="axis y">Y</text><text x="314" y="338" class="axis x">X</text>
    </svg>

    <aside class="browser">
      <div class="panel-head">
        <button class="collapse" aria-label="Collapse"><svg width="11" height="8" viewBox="0 0 11 8"><path d="M5.500 0V8L0 4ZM11 0V8L5.500 4Z" fill="#222"/></svg></button>
        <span>BROWSER</span>
        <button class="dot" aria-label="Minimize"><svg width="10" height="10" viewBox="0 0 10 10"><rect width="10" height="10" rx="4" fill="#222"/><path d="M2 5H8" stroke="#fff"/></svg></button>
      </div>
      <ul class="tree">
        <li class="root"><svg class="arrow open"><use href="#arrow-open"/></svg><div class="item"><svg class="eye"><use href="#eye"/></svg><span class="picked"><svg width="15" height="15" viewBox="0 0 15 15"><path d="M1 4L4 1H14V10L11 14H1Z" fill="#eef0f6" stroke="#555"/><path d="M11 4L14 1V10L11 14Z" fill="#9aa0b0"/></svg>MyESP32CamHolder v6</span><span class="badge">V</span><input type="radio" aria-label="Activate component" checked></div></li>
        <li class="l1"><svg class="arrow"><use href="#arrow-shut"/></svg><div class="item"><svg class="gear"><use href="#gear"/></svg>Document Settings</div></li>
        <li class="l1"><svg class="arrow"><use href="#arrow-shut"/></svg><div class="item"><svg class="folder"><use href="#folder"/></svg>Named Views</div></li>
        <li class="l1"><svg class="arrow"><use href="#arrow-shut"/></svg><div class="item"><svg class="eye"><use href="#eye-off"/></svg><svg class="folder"><use href="#folder"/></svg>Origin</div></li>
        <li class="l1"><svg class="arrow open"><use href="#arrow-open"/></svg><div class="item"><svg class="eye"><use href="#eye"/></svg><svg class="folder"><use href="#folder"/></svg>Bodies</div></li>
        <li class="l2"><div class="item"><svg class="eye"><use href="#eye"/></svg><svg class="solid"><use href="#body"/></svg>Body1</div></li>
        <li class="l2"><div class="item"><svg class="eye"><use href="#eye"/></svg><svg class="solid"><use href="#body"/></svg>Body5</div></li>
        <li class="l1"><svg class="arrow"><use href="#arrow-shut"/></svg><div class="item"><svg class="eye"><use href="#eye"/></svg><svg class="folder"><use href="#folder"/></svg>Sketches</div></li>
        <li class="l1"><svg class="arrow"><use href="#arrow-shut"/></svg><div class="item"><svg class="eye"><use href="#eye"/></svg><svg class="folder"><use href="#folder"/></svg>Construction</div></li>
      </ul>
    </aside>

    <div class="comments panel-head">
      <span>COMMENTS</span>
      <button class="dot" aria-label="Expand"><svg width="10" height="10" viewBox="0 0 10 10"><circle cx="5" cy="5" r="5" fill="#222"/><path d="M2 5H8M5 2V8" stroke="#fff"/></svg></button>
    </div>

    <div class="navbar">
      <button aria-label="Orbit"><svg width="18" height="18" viewBox="0 0 18 18"><path d="M9 0L12 3H10.500V15H12L9 18 6 15H7.500V3H6Z" fill="#fff" stroke="#555"/><path d="M6 7Q1 7 1 9.500T8 13M12 7Q17 7 17 9.500T11 13" fill="none" stroke="#444"/><path d="M5 11l4 2-4 2z" fill="#333"/></svg><svg class="caret"><use href="#caret"/></svg></button>
      <button aria-label="Look At"><svg width="18" height="18" viewBox="0 0 18 18"><path d="M2 7H16V16H2Z" fill="#ddd" stroke="#555"/><path d="M5 9.500H13V13.500H5Z" fill="#fff" stroke="#555"/><path d="M3 6L6 2L9 5 13 2V6Z" fill="#999" stroke="#555"/></svg></button>
      <button aria-label="Pan"><svg width="18" height="18" viewBox="0 0 18 18"><path d="M5 17Q4 14 1 11Q0 9 2 9L5 11 3 4Q3 2 5 4L7 8V2Q8 0 9 2L10 8 11 2Q12 1 13 3L12.500 9 15 5Q17 4 16 7Q15 12 13 17Z" fill="#fff" stroke="#555"/></svg></button>
      <button aria-label="Zoom"><svg width="18" height="18" viewBox="0 0 18 18"><circle cx="7" cy="7" r="5.500" fill="#fff" stroke="#777"/><path d="M11 11L17 17" stroke="#333" stroke-width="2.500"/><path d="M14 3H18M16 1V5M14 7H18" stroke="#555"/></svg></button>
      <button aria-label="Zoom Window"><svg width="18" height="18" viewBox="0 0 18 18"><path d="M1 1H17V17H1Z" fill="none" stroke="#888" stroke-dasharray="3 2"/><circle cx="8" cy="7" r="5.500" fill="#fff" stroke="#777"/><path d="M12 11L17 17" stroke="#333" stroke-width="2.500"/></svg><svg class="caret"><use href="#caret"/></svg></button>
      <button aria-label="Display Settings"><svg width="18" height="18" viewBox="0 0 18 18"><path d="M1 2H17V13H1Z" fill="#dfe3ea" stroke="#666"/><path d="M3 4H15V11H3Z" fill="#7ba0d4" stroke="#56789f"/><path d="M7 13H11V15H14V17H4V15H7Z" fill="#999"/></svg><svg class="caret"><use href="#caret"/></svg></button>
      <button aria-label="Grid and Snaps"><svg width="18" height="18" viewBox="0 0 18 18"><path d="M1 1H17V17H1Z" fill="#eee" stroke="#666"/><path d="M1 3.500H17M1 5.500H17M1 7.500H17M1 9.500H17M1 11.500H17M1 13.500H17M1 15.500H17M3.500 1V17M5.500 1V17M7.500 1V17M9.500 1V17M11.500 1V17M13.500 1V17M15.500 1V17" stroke="#999"/></svg><svg class="caret"><use href="#caret"/></svg></button>
      <button aria-label="Viewports"><svg width="18" height="18" viewBox="0 0 18 18"><path d="M1 3H17V16H1Z" fill="#85a8d8" stroke="#56708f"/><path d="M9 3V16M1 9.500H17" stroke="#3f5876"/></svg><svg class="caret"><use href="#caret"/></svg></button>
    </div>

    <button class="feedback" aria-label="Feedback"><svg width="12" height="10" viewBox="0 0 12 10"><path d="M0 6L7 2M2 8L10 3M6 8L11 5M10 1V9" stroke="#ddd"/></svg></button>
  </main>

  <footer class="timeline">
    <div class="playback">
      <button aria-label="To start"><svg viewBox="0 0 14 14"><path d="M0 0H2V14H0ZM14 0V14L3 7Z"/></svg></button>
      <button aria-label="Step back"><svg viewBox="0 0 14 14"><path d="M10 1V13L0 7ZM11 4H14V10H11Z"/></svg></button>
      <button aria-label="Play"><svg viewBox="0 0 14 16"><path d="M0 0V16L14 8Z"/></svg></button>
      <button aria-label="Step forward"><svg viewBox="0 0 14 14"><path d="M4 1V13L14 7ZM0 4H3V10H0Z"/></svg></button>
      <button aria-label="To end"><svg viewBox="0 0 14 14"><path d="M12 0H14V14H12ZM0 0V14L11 7Z"/></svg></button>
    </div>
    <ol class="features" id="features"></ol>
    <svg class="playhead" width="14" height="36" viewBox="0 0 14 36"><path d="M0 0H14V4L8 10V36H6V10L0 4Z" fill="#4a4a4a"/></svg>
    <button class="timeline-settings" aria-label="Timeline settings"><svg><use href="#gear"/></svg></button>
  </footer>

  <script>
    // Ground grid: origin plus two step vectors, each cell split into five
    const origin = [1001, 581];
    const across = [128.8, 16.9];
    const down = [-53.9, 41.2];
    const farEdge = -10;

    function point(a, d) {
      return (origin[0] + a * across[0] + d * down[0]).toFixed(1) + ' ' +
             (origin[1] + a * across[1] + d * down[1]).toFixed(1);
    }

    let major = '';
    let minor = '';
    for (let i = -80; i <= 80; i++) {
      const line = 'M' + point(i / 5, farEdge) + 'L' + point(i / 5, 20);
      if (i % 5 === 0) major += line; else minor += line;
    }
    for (let i = farEdge * 5; i <= 80; i++) {
      const line = 'M' + point(-20, i / 5) + 'L' + point(20, i / 5);
      if (i % 5 === 0) major += line; else minor += line;
    }
    document.getElementById('grid-major').setAttribute('d', major);
    document.getElementById('grid-minor').setAttribute('d', minor);

    // Timeline features in build order
    const features = [
      't-base', 't-sketch', 'extrude', 'extrude', 't-sketch', 'extrude', 'extrude', 't-sketch', 'extrude', 't-canvas',
      't-sketch', 'extrude', 'extrude', 'combine', 't-chamfer', 't-midplane', 't-sketch', 'revolve', 't-sketch', 't-sketch',
      'extrude', 't-chamfer', 't-chamfer', 'plane', 't-sketch', 'extrude', 't-chamfer', 'move', 'move'
    ];
    document.getElementById('features').innerHTML = features.map(name =>
      `<li><button aria-label="${name.replace('t-', '')}"><svg><use href="#${name}"/></svg></button></li>`
    ).join('');
  </script>
</body>
</html>
```
FILE: styles.css
```css
* {
  box-sizing: border-box;
}

body {
  margin: 0;
  height: 100vh;
  display: flex;
  flex-direction: column;
  background: linear-gradient(to right, #8c8c8c 94%, #b3201a 94%, #d9803a);
  color: #2d2d2d;
  font-family: "Open Sans", "Noto Sans", sans-serif;
  font-size: 13px;
  overflow: hidden;
}

button {
  display: flex;
  align-items: center;
  justify-content: center;
  margin: 0;
  padding: 0;
  border: 0;
  background: none;
  color: inherit;
  font: inherit;
}

.sprite {
  position: absolute;
  width: 0;
  height: 0;
}

.caret {
  width: 7px;
  height: 6px;
}

/* title bar */
.titlebar {
  display: flex;
  height: 37px;
  padding-top: 5px;
  background: #cacaca;
  border-top: 1px solid #a9b0a9;
}

.quick-tools {
  display: flex;
  align-items: center;
  width: 215px;
  padding: 0 10px 4px;
  gap: 20px;
  color: #626262;
}

.quick-tools button {
  gap: 7px;
}

.quick-tools .off {
  color: #909090;
}

.doc-tabs {
  display: flex;
  flex: 1;
  gap: 4px;
}

.doc-tab {
  display: flex;
  flex: 1;
  align-items: center;
  padding: 0 6px;
  border-radius: 5px 5px 0 0;
  background: #b9b9b9;
  color: #676767;
}

.doc-tab.active {
  background: #f1f1f1;
  color: #3c3c3c;
}

.doc-name {
  flex: 1;
  gap: 5px;
  font-size: 14px;
}

.doc-name svg {
  width: 16px;
  height: 18px;
}

.close {
  color: #777;
}

.close svg {
  width: 12px;
  height: 12px;
}

.new-tab {
  width: 30px;
  border-radius: 5px 5px 0 0;
  background: #bdbdbd;
}

.account-tools {
  display: flex;
  align-items: center;
  gap: 19px;
  width: 222px;
  padding: 0 0 4px 14px;
}

.jobs {
  gap: 5px;
  font-size: 14px;
}

.bell {
  margin-left: 8px;
}

.help {
  width: 18px;
  height: 18px;
  border-radius: 50%;
  background: #5f5f5f;
  color: #fff;
  font-size: 14px;
  font-weight: bold;
}

/* ribbon */
.ribbon {
  display: flex;
  height: 90px;
  background: #f1f1f1;
  border-bottom: 1px solid #dcdcdc;
}

.workspace {
  gap: 7px;
  width: 121px;
  height: 67px;
  margin: 10px 5px 0 13px;
  border: 1px solid #c6c6c6;
  border-radius: 4px;
  font-weight: 600;
}

.ribbon-tabs {
  display: flex;
  gap: 18px;
  height: 25px;
  padding-left: 13px;
}

.ribbon-tabs button {
  padding: 0 15px;
  border-bottom: 3px solid transparent;
}

.ribbon-tabs .active {
  border-color: #0b95d9;
  color: #0b8fd4;
  font-weight: 600;
}

.groups {
  display: flex;
}

.group {
  display: flex;
  flex-direction: column;
  align-items: center;
  height: 62px;
  margin-top: 1px;
  padding: 0 12px;
  border-right: 1px solid #cfcfcf;
}

.group:last-child {
  border: 0;
}

.tools {
  display: flex;
  align-items: center;
  gap: 11px;
  height: 42px;
}

.tools svg {
  display: block;
  width: 36px;
  height: 36px;
}

.tools .select-tool svg {
  width: 42px;
  height: 42px;
}

.group-name {
  gap: 3px;
  height: 20px;
  padding: 0 2px;
}

/* canvas */
.viewport {
  position: relative;
  flex: 1;
  min-height: 0;
  background: #fff;
  overflow: hidden;
}

.scene {
  position: absolute;
  width: 100%;
  height: 100%;
}

.grid {
  fill: none;
}

.grid.minor {
  stroke: #f6f6f6;
}

.grid.major {
  stroke: #e3e3e3;
}

.horizon {
  stroke: #999;
}

.viewcube {
  position: absolute;
  top: 3px;
  right: 0;
  width: 160px;
  height: 130px;
}

.cube-shadow {
  fill: #bbb;
  filter: blur(8px);
}

.face {
  fill: #8b8b8d;
  font-size: 34px;
  font-weight: bold;
  text-anchor: middle;
}

.face.side {
  font-size: 17px;
}

.axis {
  font-size: 38px;
  text-anchor: middle;
}

.axis.x {
  fill: #f26666;
}

.axis.y {
  fill: #5ee65e;
}

.panel-head {
  display: flex;
  align-items: center;
  width: 329px;
  height: 27px;
  padding: 0 11px 0 5px;
  background: #f1f1f1;
  border: 1px solid #d0d0d0;
  border-width: 0 1px 1px 0;
  color: #555;
}

.panel-head .collapse {
  width: 11px;
}

.panel-head span {
  flex: 1;
  padding-left: 11px;
}

.browser {
  position: absolute;
  top: 7px;
  left: 5px;
}

.comments {
  position: absolute;
  bottom: 5px;
  left: 5px;
}

.comments span {
  padding-left: 22px;
}

.tree {
  display: flex;
  flex-direction: column;
  justify-content: space-between;
  height: 233px;
  margin: 6px 0 0;
  padding: 0;
  list-style: none;
}

.tree li {
  display: flex;
  align-items: center;
  gap: 10px;
}

.tree .root {
  padding-left: 20px;
}

.tree .l1 {
  padding-left: 39px;
}

.tree .l2 {
  padding-left: 78px;
}

.arrow {
  width: 9px;
  height: 11px;
}

.arrow.open {
  height: 9px;
}

.item {
  display: flex;
  align-items: center;
  height: 21px;
  padding: 0 10px 0 3px;
  background: #f1f1f1;
}

.root .item {
  padding: 0 8px 0 3px;
}

.eye {
  width: 18px;
  height: 12px;
  margin-right: 10px;
}

.root .eye {
  margin-right: 7px;
}

.folder {
  width: 18px;
  height: 14px;
  margin-right: 15px;
}

.solid {
  width: 18px;
  height: 16px;
  margin-right: 15px;
}

.gear {
  width: 15px;
  height: 15px;
  margin-right: 14px;
  color: #858585;
}

.picked {
  display: flex;
  align-items: center;
  gap: 16px;
  height: 18px;
  padding: 0 12px 0 5px;
  background: #909090;
  color: #fff;
  font-weight: 600;
}

.badge {
  width: 16px;
  height: 16px;
  margin: 0 8px 0 4px;
  border-radius: 50%;
  background: #6a3ab0;
  color: #fff;
  font-size: 11px;
  font-weight: bold;
  line-height: 16px;
  text-align: center;
}

.root input {
  appearance: none;
  width: 16px;
  height: 16px;
  margin: 0;
  border: 1px solid #777;
  border-radius: 50%;
  background: radial-gradient(#333 3px, #e8ebf2 4px);
}

.navbar {
  position: absolute;
  bottom: 7px;
  left: 50%;
  display: flex;
  align-items: center;
  gap: 7px;
  height: 27px;
  padding: 0 4px 0 3px;
  background: #f3f3f3;
  transform: translateX(-50%);
}

.navbar button {
  gap: 3px;
  min-width: 21px;
  color: #333;
}

.feedback {
  position: absolute;
  right: 13px;
  bottom: 6px;
  width: 19px;
  height: 19px;
  border-radius: 50% 50% 0 50%;
  background: #000;
}

/* timeline */
.timeline {
  display: flex;
  align-items: flex-start;
  height: 55px;
  margin-bottom: 1px;
  padding: 0 15px 0 11px;
  border-top: 3px solid #cacaca;
  border-radius: 0 0 10px 10px;
  background: linear-gradient(#f3f3f3 50%, #e6e6e6);
}

.playback {
  display: flex;
  gap: 14px;
  padding-top: 19px;
}

.playback svg {
  width: 14px;
  height: 14px;
  fill: #565656;
}

.features {
  display: flex;
  justify-content: space-between;
  width: 762px;
  margin: 16px 0 0 21px;
  padding: 0;
  list-style: none;
}

.features li {
  position: relative;
  height: 29px;
}

.features svg {
  display: block;
  width: 19px;
  height: 19px;
}

.features button {
  width: 20px;
}

/* tick and track under each feature */
.features li::after {
  content: "";
  position: absolute;
  left: 11px;
  bottom: 0;
  width: 27px;
  height: 6px;
  border: solid #c2c2c2;
  border-width: 0 0 2px 2px;
}

.features li:last-child::after {
  width: 2px;
  border-bottom: 0;
}

.playhead {
  margin: 10px 0 0 -5px;
}

.timeline-settings {
  margin: 17px 0 0 auto;
  color: #757575;
}

.timeline-settings svg {
  width: 17px;
  height: 17px;
}
```
